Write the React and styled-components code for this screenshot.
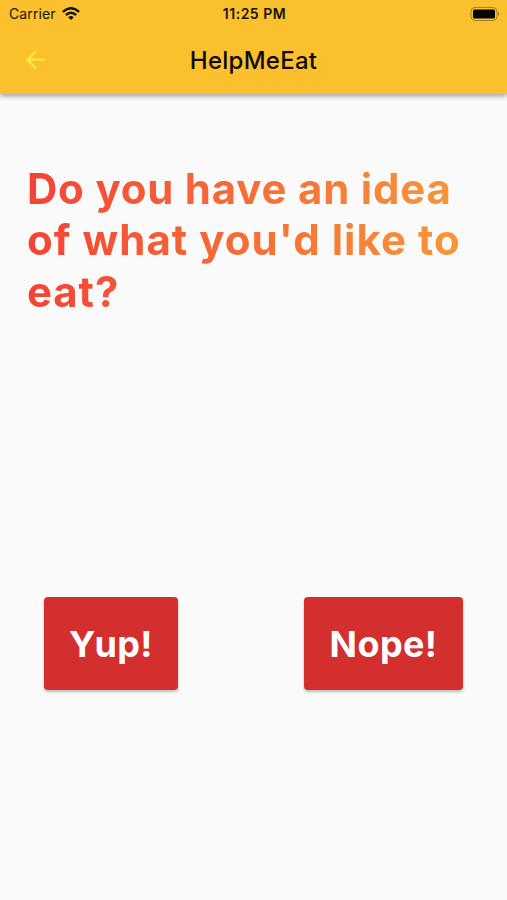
import React from 'react';
import styled, { createGlobalStyle } from 'styled-components';

const Global = createGlobalStyle`
  * { box-sizing: border-box; }
  body { margin: 0; background: #fafafa; font-family: Inter, "Liberation Sans", sans-serif; }
`;
const Screen = styled.main`
  width: 507px; height: 900px; overflow: hidden; background: #fafafa;
  display: flex; flex-direction: column;
`;
const Header = styled.header`
  flex: none; height: 94px; background: #fbc02d;
  box-shadow: 0 2px 5px rgba(0,0,0,.38);
`;
const StatusBar = styled.div`
  height: 27px; padding: 0 7px 0 9px; display: grid;
  grid-template-columns: 1fr auto 1fr; align-items: center; color: #171307;
`;
const Carrier = styled.div`
  display: flex; align-items: center; gap: 6px; font-size: 14px; letter-spacing: .12px;
`;
const Time = styled.div`font-size: 14px; font-weight: 600; letter-spacing: .5px;`;
const Battery = styled.div`display: flex; justify-content: flex-end;`;
const NavBar = styled.nav`
  height: 66px; padding: 0 24px; display: grid;
  grid-template-columns: 24px 1fr 24px; align-items: center;
`;
const BackButton = styled.button`
  border: 0; padding: 0; background: none; color: #ffeb3b; display: flex;
`;
const Title = styled.div`
  text-align: center; font-size: 24px; font-weight: 500; letter-spacing: .25px; color: #100c03;
`;
const Question = styled.h1`
  margin: 69px 27px 0; width: 453px; font-size: 42px; line-height: 51.3px;
  font-weight: 700;
  background: linear-gradient(to right, #f44336, #f79a38);
  background-clip: text; -webkit-background-clip: text; color: transparent;
`;
const Line = styled.span`display: block; width: max-content; letter-spacing: ${p => p.$track}px;`;
const Answers = styled.div`
  margin: 280px 44px 0; display: flex; justify-content: space-between;
`;
const Answer = styled.button`
  width: ${p => p.$width}px; height: 93px; border: 0; border-radius: 4px; padding: 2px 0 0;
  background: #d32f2f; color: #fff; font: 700 36px Inter, "Liberation Sans", sans-serif;
  letter-spacing: .4px;
  box-shadow: 0 2px 3px rgba(0,0,0,.25);
`;

export default function App() {
  return (
    <Screen>
      <Global />
      <Header>
        <StatusBar>
          <Carrier>Carrier
            <svg width="18" height="14" viewBox="0 0 18 14" fill="none" stroke="#111" strokeWidth="2.4">
              <path d="M.9 4.8Q9-2.4 17.1 4.8M3.9 8Q9 3.6 14.1 8" />
              <path d="M6.2 10.2Q9 7.8 11.8 10.2L9 13Z" fill="#111" stroke="none" />
            </svg>
          </Carrier>
          <Time>11:25 PM</Time>
          <Battery>
            <svg width="30" height="14" viewBox="0 0 30 14">
              <rect x="1" y=".5" width="26" height="13" rx="4" fill="none" stroke="#a37d24" />
              <rect x="3" y="2.5" width="22" height="9" rx="1.5" fill="#080602" />
              <path d="M28 5Q30.5 7 28 9Z" fill="#a37d24" />
            </svg>
          </Battery>
        </StatusBar>
        <NavBar>
          <BackButton aria-label="Back">
            <svg width="22" height="22" viewBox="0 0 22 22" fill="none" stroke="currentColor" strokeWidth="2.2">
              <path d="M20.5 10.7H3M12 2L3.3 10.7L12 19.4" />
            </svg>
          </BackButton>
          <Title>HelpMeEat</Title>
        </NavBar>
      </Header>
      <Question>
        <Line $track={0.78}>Do you have an idea</Line>
        <Line $track={1.03}>of what you'd like to</Line>
        <Line $track={0.9}>eat?</Line>
      </Question>
      <Answers>
        <Answer $width={134}>Yup!</Answer>
        <Answer $width={159}>Nope!</Answer>
      </Answers>
    </Screen>
  );
}
